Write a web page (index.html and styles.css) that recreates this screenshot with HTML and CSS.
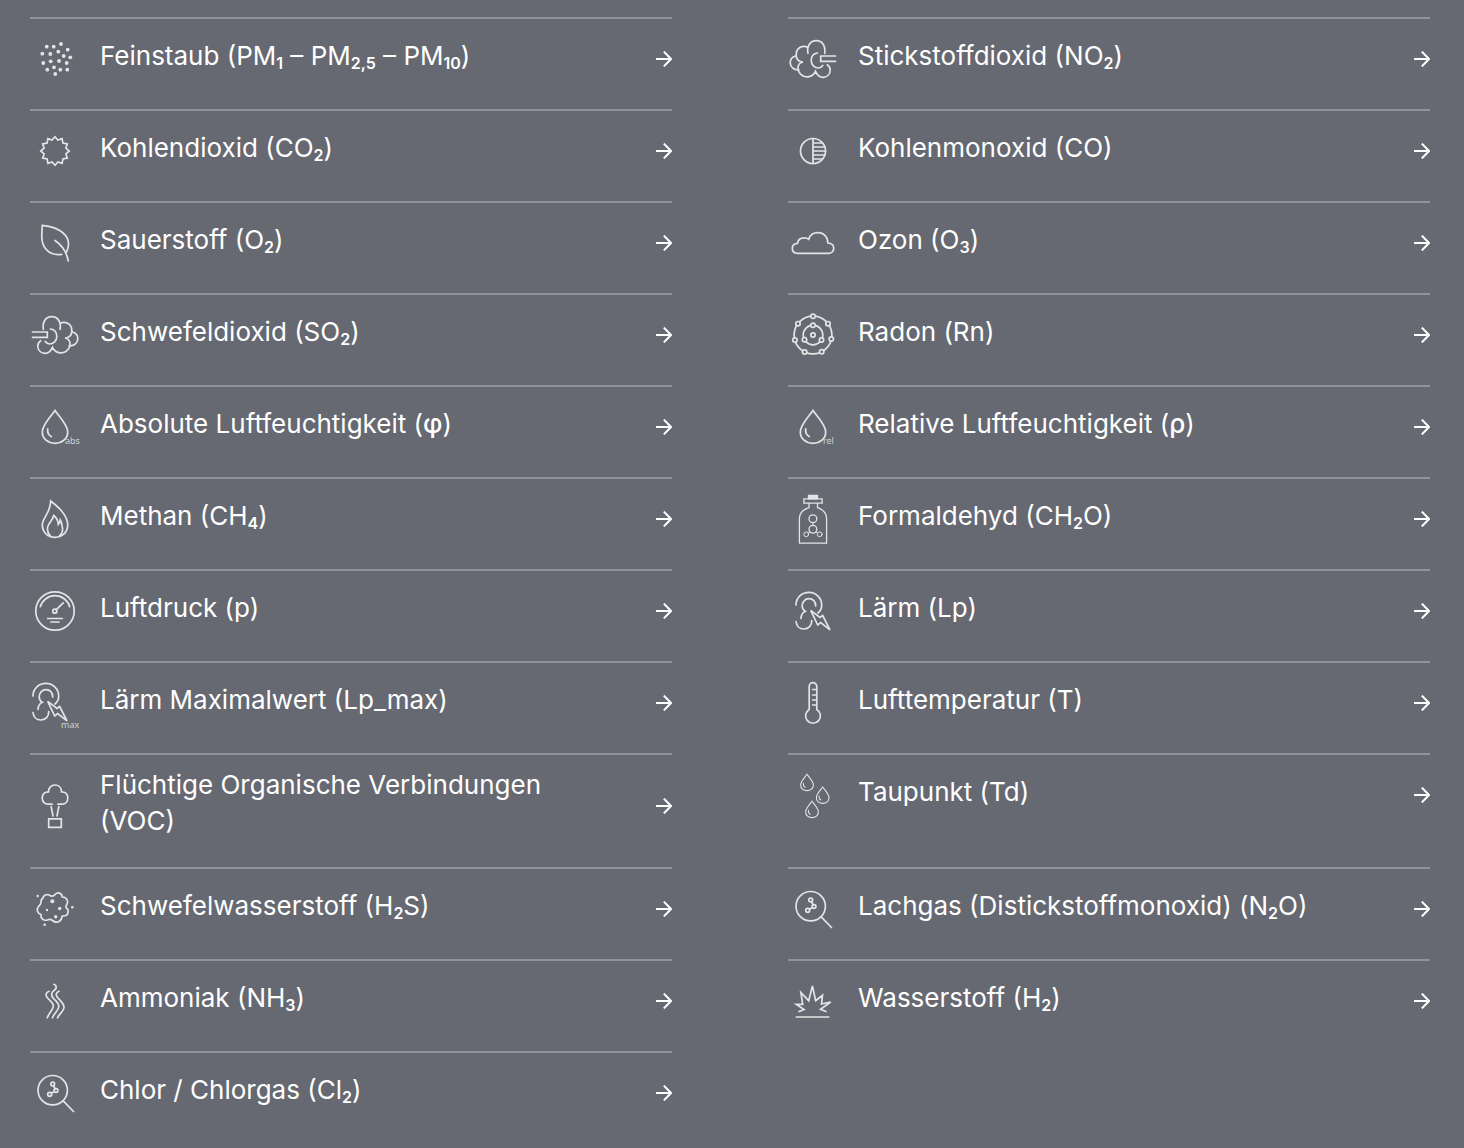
FILE: index.html
```html
<!DOCTYPE html>
<html lang="de">
<head>
<meta charset="utf-8" />
<meta name="viewport" content="width=device-width, initial-scale=1" />
<title>Messwerte</title>
<link rel="stylesheet" href="styles.css">
</head>
<body>
<!-- shapes used by more than one entry -->
<svg class="defs" aria-hidden="true">
  <symbol id="arrow" viewBox="0 0 16 16"><path d="M0 8h15M7.800 .6L15 8l-7.200 7.400" /></symbol>
  <symbol id="gas" viewBox="0 0 50 50">
    <path d="M2.500 22h14.800v5.300H2.500" />
    <path d="M13.300 19.300C12.300 11.500 16 6.700 21.700 6.700C28 6.700 31.500 12.500 30 19.300" />
    <path d="M30.300 13.200C36 11 41.500 14.200 41.800 20C42 24.500 39.500 27.500 35.700 28" />
    <path d="M42 21.800C46 23 48 25.500 47.800 29C47.500 33.500 43.500 36.300 39.300 35.800" />
    <path d="M35.700 28C40 29.500 41 33.500 39.300 37.300C37.300 41.300 34 43 30.300 42.800C26.500 42.500 24 40.500 22.500 37.300C20.500 41.500 18 43.500 14.500 43.300C10.500 43 7.800 40 7.800 36C7.800 33.700 9 31.800 10.700 30.700" />
    <path d="M20.500 19C24.300 19.500 26.800 22.500 26.800 26.500C26.800 30.800 23.500 34 19.500 34C18 34 16.300 33 15.200 31.500" />
  </symbol>
  <symbol id="drop" viewBox="0 0 50 50">
    <path d="M25 8.500C29 14.500 37.700 22.500 37.700 30C37.700 36.800 32 41.300 25 41.300S12.300 36.800 12.300 30C12.300 22.500 21 14.500 25 8.500z" />
    <path d="M17.700 26.800C17.300 30 18.500 33 21.300 34.500" />
  </symbol>
  <symbol id="ear" viewBox="0 0 50 50">
    <path d="M8 19C8 11.500 14 6.300 21 6.300S33.700 12 33.700 19C33.700 22.500 32.500 25 30 27" />
    <path d="M27.700 20C27.700 15.500 25 12.700 21 12.700S14.200 16 14.200 20C14.200 22.500 15.300 24 17.300 25.300C14.500 26.500 13.200 29 13 32.500" />
    <path d="M8 35.500C8.500 40 11.500 43 15.800 43C20.500 43 24 39.500 23.700 34.500" />
    <path d="M22.700 24.300L32 31.500L34.700 29.500L42 43.800L32.700 36.500L29.700 39z" />
  </symbol>
  <symbol id="lens" viewBox="0 0 50 50">
    <circle cx="22.700" cy="22.200" r="14.700" />
    <path d="M33.200 32.800L43.500 43.500M23.500 17.700L25.200 21M24.300 23.500L21.300 25.200" />
    <circle cx="22.700" cy="16" r="1.900" />
    <circle cx="26" cy="22.500" r="1.900" />
    <circle cx="19.700" cy="26.300" r="2" />
  </symbol>
</svg>

<ul class="values">
  <li class="value">
    <a class="value-link" href="#">
      <svg class="icon dots" viewBox="0 0 50 50" aria-hidden="true">
        <circle cx="31" cy="10" r="1.900" /><circle cx="16.700" cy="12.700" r="1.900" /><circle cx="23.700" cy="12.700" r="1.900" />
        <circle cx="37.700" cy="15.700" r="1.900" /><circle cx="28.300" cy="17.700" r="1.900" /><circle cx="12.300" cy="19.700" r="1.900" />
        <circle cx="20.300" cy="20" r="1.900" /><circle cx="33.700" cy="22" r="1.900" /><circle cx="40.300" cy="23.300" r="1.900" />
        <circle cx="20.700" cy="27.300" r="1.900" /><circle cx="29" cy="27" r="1.900" /><circle cx="13.300" cy="29" r="1.900" />
        <circle cx="36.700" cy="29" r="1.900" /><circle cx="24" cy="33.300" r="1.900" /><circle cx="17.300" cy="35.700" r="1.900" />
        <circle cx="30.300" cy="35.700" r="1.900" /><circle cx="37.300" cy="35.700" r="1.900" /><circle cx="25.300" cy="40" r="1.900" />
      </svg>
      <span class="name">Feinstaub (PM<sub>1</sub> – PM<sub>2,5</sub> – PM<sub>10</sub>)</span>
      <svg class="arrow" aria-hidden="true"><use href="#arrow" /></svg>
    </a>
  </li>
  <li class="value">
    <a class="value-link" href="#">
      <svg class="icon flip" aria-hidden="true"><use href="#gas" /></svg>
      <span class="name">Stickstoffdioxid (NO<sub>2</sub>)</span>
      <svg class="arrow" aria-hidden="true"><use href="#arrow" /></svg>
    </a>
  </li>
  <li class="value">
    <a class="value-link" href="#">
      <svg class="icon" viewBox="0 0 50 50" aria-hidden="true">
        <path d="M25 10.800L27.900 14.100L32.100 12.700L32.900 17.100L37.300 17.900L35.900 22.100L39.200 25L35.900 27.900L37.300 32.100L32.900 32.900L32.100 37.300L27.900 35.900L25 39.200L22.100 35.900L17.900 37.300L17.100 32.900L12.700 32.100L14.100 27.900L10.800 25L14.100 22.100L12.700 17.900L17.100 17.100L17.900 12.700L22.100 14.100z" />
      </svg>
      <span class="name">Kohlendioxid (CO<sub>2</sub>)</span>
      <svg class="arrow" aria-hidden="true"><use href="#arrow" /></svg>
    </a>
  </li>
  <li class="value">
    <a class="value-link" href="#">
      <svg class="icon" viewBox="0 0 50 50" aria-hidden="true">
        <circle cx="25" cy="25" r="12.500" />
        <path d="M25 12.500v25M25 17h9.500M25 21h11.800M25 25h12.500M25 29h11.800M25 33h9.500" />
      </svg>
      <span class="name">Kohlenmonoxid (CO)</span>
      <svg class="arrow" aria-hidden="true"><use href="#arrow" /></svg>
    </a>
  </li>
  <li class="value">
    <a class="value-link" href="#">
      <svg class="icon" viewBox="0 0 50 50" aria-hidden="true">
        <path d="M31.700 36.300C19 38 12 30 11.800 19C11.700 14.500 12 11 12.300 7.300C26 8.500 36.500 14.500 38.300 23.500C39 27.500 38 31 36.500 34" />
        <path d="M25 22.500C31 26.500 36.500 33.500 38.300 43" />
      </svg>
      <span class="name">Sauerstoff (O<sub>2</sub>)</span>
      <svg class="arrow" aria-hidden="true"><use href="#arrow" /></svg>
    </a>
  </li>
  <li class="value">
    <a class="value-link" href="#">
      <svg class="icon" viewBox="0 0 50 50" aria-hidden="true">
        <path d="M9.500 35.300C6 35.300 4.300 33 4.300 30.300C4.300 27.500 6.300 25.500 9.500 25.300C10 21.500 12.500 19.800 16 19.800C18 19.800 19.500 20.200 20.700 21.200C22 17 25.500 14.700 30 14.700C35.500 14.700 39.700 18.500 39.900 25C43.500 25.200 45.700 27.300 45.700 30.300C45.700 33.300 43.500 35.300 40.500 35.300z" />
      </svg>
      <span class="name">Ozon (O<sub>3</sub>)</span>
      <svg class="arrow" aria-hidden="true"><use href="#arrow" /></svg>
    </a>
  </li>
  <li class="value">
    <a class="value-link" href="#">
      <svg class="icon" aria-hidden="true"><use href="#gas" /></svg>
      <span class="name">Schwefeldioxid (SO<sub>2</sub>)</span>
      <svg class="arrow" aria-hidden="true"><use href="#arrow" /></svg>
    </a>
  </li>
  <li class="value">
    <a class="value-link" href="#">
      <svg class="icon nodes" viewBox="0 0 50 50" aria-hidden="true">
        <circle cx="25" cy="25" r="18.900" /><circle cx="25" cy="25" r="9.800" /><circle cx="25" cy="25" r="2.200" />
        <circle cx="25" cy="15.300" r="2.200" /><circle cx="16.500" cy="29.700" r="2.200" /><circle cx="33.500" cy="30" r="2.200" />
        <circle cx="25" cy="6.300" r="2.200" /><circle cx="40" cy="13.700" r="2.200" /><circle cx="43.300" cy="29" r="2.200" />
        <circle cx="33.700" cy="41.800" r="2.200" /><circle cx="16.700" cy="42" r="2.200" /><circle cx="6.900" cy="30" r="2.200" />
        <circle cx="10" cy="13.700" r="2.200" />
      </svg>
      <span class="name">Radon (Rn)</span>
      <svg class="arrow" aria-hidden="true"><use href="#arrow" /></svg>
    </a>
  </li>
  <li class="value">
    <a class="value-link" href="#">
      <svg class="icon" viewBox="0 0 50 50" aria-hidden="true"><use href="#drop" /><text x="35" y="42">abs</text></svg>
      <span class="name">Absolute Luftfeuchtigkeit (<b>φ</b>)</span>
      <svg class="arrow" aria-hidden="true"><use href="#arrow" /></svg>
    </a>
  </li>
  <li class="value">
    <a class="value-link" href="#">
      <svg class="icon" viewBox="0 0 50 50" aria-hidden="true"><use href="#drop" /><text x="35" y="42">rel</text></svg>
      <span class="name">Relative Luftfeuchtigkeit (<b>ρ</b>)</span>
      <svg class="arrow" aria-hidden="true"><use href="#arrow" /></svg>
    </a>
  </li>
  <li class="value">
    <a class="value-link" href="#">
      <svg class="icon" viewBox="0 0 50 50" aria-hidden="true">
        <path d="M20.700 7C27 12 37.700 20.500 37.700 31C37.700 38.500 32 43.300 25 43.300S12.300 38 12.300 31C12.300 23.500 20.500 19.500 20.700 7z" />
        <path d="M20.500 42C18 39.500 17.300 37 17.500 34C17.800 29.500 22.500 27 23.700 21.500C26.500 23.500 28 26.500 28.300 30.500C29.300 29.500 30 28 30.300 26C31.800 28.500 32 30 31.900 31.500C33.500 35 32.500 39.500 29.500 42" />
      </svg>
      <span class="name">Methan (CH<sub>4</sub>)</span>
      <svg class="arrow" aria-hidden="true"><use href="#arrow" /></svg>
    </a>
  </li>
  <li class="value">
    <a class="value-link" href="#">
      <svg class="icon thin" viewBox="0 0 50 50" aria-hidden="true">
        <path class="solid" d="M20.500 1.300h9v3.500h-9z" />
        <path d="M15.900 4.800h18.200v4.400H15.900zM21 9.200v4.500C15 15.500 11.500 18.500 11.400 24.500V49.200h27.200V24.500C38.500 18.500 35 15.500 29.500 13.700V9.200" />
        <circle cx="24.900" cy="24.700" r="3.900" /><circle cx="24.900" cy="35.300" r="3.900" />
        <g class="faint">
          <circle cx="18.200" cy="40.300" r="2.400" /><circle cx="31.700" cy="40.300" r="2.400" />
          <path d="M24.900 28.600v2.800M22 37.900l-1.800 1.100M27.800 37.900l1.800 1.100" />
        </g>
      </svg>
      <span class="name">Formaldehyd (CH<sub>2</sub>O)</span>
      <svg class="arrow" aria-hidden="true"><use href="#arrow" /></svg>
    </a>
  </li>
  <li class="value">
    <a class="value-link" href="#">
      <svg class="icon" viewBox="0 0 50 50" aria-hidden="true">
        <circle cx="25" cy="25" r="19.200" /><circle cx="24.800" cy="25.200" r="2" />
        <path d="M10.300 20.700A15.300 15.300 0 0 1 39.700 20.700M26.300 23.700L33.300 16.800M17.700 32.500h14.600M21 36h8" />
      </svg>
      <span class="name">Luftdruck (p)</span>
      <svg class="arrow" aria-hidden="true"><use href="#arrow" /></svg>
    </a>
  </li>
  <li class="value">
    <a class="value-link" href="#">
      <svg class="icon" aria-hidden="true"><use href="#ear" /></svg>
      <span class="name">Lärm (Lp)</span>
      <svg class="arrow" aria-hidden="true"><use href="#arrow" /></svg>
    </a>
  </li>
  <li class="value">
    <a class="value-link" href="#">
      <svg class="icon" viewBox="0 0 50 50" aria-hidden="true"><use href="#ear" x="-5" y="-1" width="50" height="50" /><text x="31" y="50">max</text></svg>
      <span class="name">Lärm Maximalwert (Lp_max)</span>
      <svg class="arrow" aria-hidden="true"><use href="#arrow" /></svg>
    </a>
  </li>
  <li class="value">
    <a class="value-link" href="#">
      <svg class="icon" viewBox="0 0 50 50" aria-hidden="true">
        <path d="M21.200 31.500V8.500a3.800 3.800 0 0 1 7.600 0V31.500A7.400 7.400 0 1 1 21.200 31.500zM24.700 11.500h4M24.700 17h4M24.700 22h4M24.700 27h4" />
      </svg>
      <span class="name">Lufttemperatur (T)</span>
      <svg class="arrow" aria-hidden="true"><use href="#arrow" /></svg>
    </a>
  </li>
  <li class="value">
    <a class="value-link" href="#">
      <svg class="icon" viewBox="0 0 50 50" aria-hidden="true">
        <path d="M22 23.200H18C14.500 23.200 12.200 20.500 12.200 17C12.200 13.200 14.800 10.800 18.500 10.800C18.500 6.500 21.300 4 25 4S31.500 6.500 31.500 10.800C35.200 10.800 37.800 13.200 37.800 17C37.800 20.500 35.500 23.200 32 23.200H28" />
        <path d="M21.200 25.700L23 35M28.800 25.700L27 35M18.700 37.900h12.600v8.400H18.700z" />
      </svg>
      <span class="name">Flüchtige Organische Verbindungen (VOC)</span>
      <svg class="arrow" aria-hidden="true"><use href="#arrow" /></svg>
    </a>
  </li>
  <li class="value">
    <a class="value-link" href="#">
      <svg class="icon drops" viewBox="0 0 50 50" aria-hidden="true">
        <use href="#drop" x="6.500" y="0" width="25" height="25" />
        <use href="#drop" x="22.200" y="12.700" width="25" height="25" />
        <use href="#drop" x="11.500" y="27" width="25" height="25" />
      </svg>
      <span class="name">Taupunkt (Td)</span>
      <svg class="arrow" aria-hidden="true"><use href="#arrow" /></svg>
    </a>
  </li>
  <li class="value">
    <a class="value-link" href="#">
      <svg class="icon" viewBox="0 0 50 50" aria-hidden="true">
        <path d="M13 14C13.500 10.500 18 9.500 20.800 12C22.500 12.300 24 12 25 10.500C27.500 7.500 32 9 32.300 13C36 13 38.500 16 37.300 19.500C36.800 21 35.500 21.500 36 23.500C39 25.500 39 30 35.800 31.500C34.500 32 33 31.500 32 32.300C31.500 37.500 26.500 40 22.500 36.500C20.500 34.800 19 35.300 17.500 36C13.500 37 10.500 34.500 11 30.500C7.500 29.500 6 25.500 8.500 22.500C9.500 21.300 11 20.500 11 18.500C10.800 16.500 11.500 15 13 14z" />
        <g class="dots">
          <circle cx="22.300" cy="17.300" r="2" /><circle cx="29.700" cy="24.500" r="1.700" /><circle cx="17" cy="26" r="1.200" />
          <circle cx="25.700" cy="32.700" r="1.700" /><circle cx="7.700" cy="12" r="1.200" /><circle cx="42.300" cy="23.300" r="1.300" />
          <circle cx="14.700" cy="40.700" r="1.300" />
        </g>
      </svg>
      <span class="name">Schwefelwasserstoff (H<sub>2</sub>S)</span>
      <svg class="arrow" aria-hidden="true"><use href="#arrow" /></svg>
    </a>
  </li>
  <li class="value">
    <a class="value-link" href="#">
      <svg class="icon" aria-hidden="true"><use href="#lens" /></svg>
      <span class="name">Lachgas (Distickstoffmonoxid) (N<sub>2</sub>O)</span>
      <svg class="arrow" aria-hidden="true"><use href="#arrow" /></svg>
    </a>
  </li>
  <li class="value">
    <a class="value-link" href="#">
      <svg class="icon" viewBox="0 0 50 50" aria-hidden="true">
        <path d="M19 15.300C15.500 16.500 15.300 19.500 17.500 22C20 25 23.300 26.500 23.300 30C23.300 34 19 36.500 17.300 41.800" />
        <path d="M24 8.300C27.500 10 26.500 12.500 24 14.500C21 16.500 21 19.500 23.300 22.200C25.500 25 29 27 28.800 30.500C28.600 34.500 24 37 22.500 41.800" />
        <path d="M29 15.300C25.500 16.500 25.500 19.500 28 22C30.500 25 34.200 27.500 34 31.500C33.800 35.500 29.300 37.500 27.500 41.800" />
      </svg>
      <span class="name">Ammoniak (NH<sub>3</sub>)</span>
      <svg class="arrow" aria-hidden="true"><use href="#arrow" /></svg>
    </a>
  </li>
  <li class="value">
    <a class="value-link" href="#">
      <svg class="icon" viewBox="0 0 50 50" aria-hidden="true">
        <path d="M11 35.500L16 33.500L8.300 28.300L14.700 28.300L12.900 16.500L20.700 24.700L24.400 10L27.700 24.700L34.500 19.300L33.500 28L42.700 26L32.500 33.200L38 35.500M8.300 41h32.500" />
      </svg>
      <span class="name">Wasserstoff (H<sub>2</sub>)</span>
      <svg class="arrow" aria-hidden="true"><use href="#arrow" /></svg>
    </a>
  </li>
  <li class="value">
    <a class="value-link" href="#">
      <svg class="icon" aria-hidden="true"><use href="#lens" /></svg>
      <span class="name">Chlor / Chlorgas (Cl<sub>2</sub>)</span>
      <svg class="arrow" aria-hidden="true"><use href="#arrow" /></svg>
    </a>
  </li>
</ul>
</body>
</html>
```

FILE: styles.css
```css
* {
  box-sizing: border-box;
  margin: 0;
  padding: 0;
}
body {
  background-color: #666971;
  color: #fff;
  font-family: Inter, 'Liberation Sans', Arial, sans-serif;
  font-size: 26px;
  line-height: 36px;
}
.defs {
  display: none;
}
.values {
  column-gap: 116px;
  display: grid;
  grid-template-columns: 1fr 1fr;
  list-style: none;
  padding: 17px 34px 0 30px;
}
.value {
  border-top: 2px solid #90939c;
  padding: 12px 0 22px;
}
.value-link {
  align-items: center;
  color: inherit;
  display: flex;
  min-height: 56px;
  text-decoration: none;
}
.icon {
  fill: none;
  flex: none;
  height: 50px;
  overflow: visible;
  stroke: #e3e4e6;
  stroke-linecap: round;
  stroke-width: 1.7;
  width: 50px;
}
.icon text {
  fill: #d0d1d5;
  font-family: 'Noto Sans', sans-serif;
  font-size: 9px;
  stroke: none;
}
.flip {
  transform: scaleX(-1);
}
.dots {
  fill: #e3e4e6;
  stroke: none;
}
.nodes circle + circle + circle {
  fill: #666971;
}
.drops {
  stroke-width: 2.2;
}
.thin {
  stroke-width: 1.3;
}
.faint {
  stroke-width: 1;
}
.solid {
  fill: #e3e4e6;
}
.name {
  flex: 1;
  padding: 0 60px 6px 20px;
}
.name sub {
  font-size: 16px;
  font-weight: 600;
  line-height: 0;
  position: relative;
  top: 4px;
  vertical-align: baseline;
}
.name b {
  font-weight: 500;
}
.arrow {
  fill: none;
  flex: none;
  height: 16px;
  stroke: #fff;
  stroke-width: 2px;
  width: 16px;
}
```
